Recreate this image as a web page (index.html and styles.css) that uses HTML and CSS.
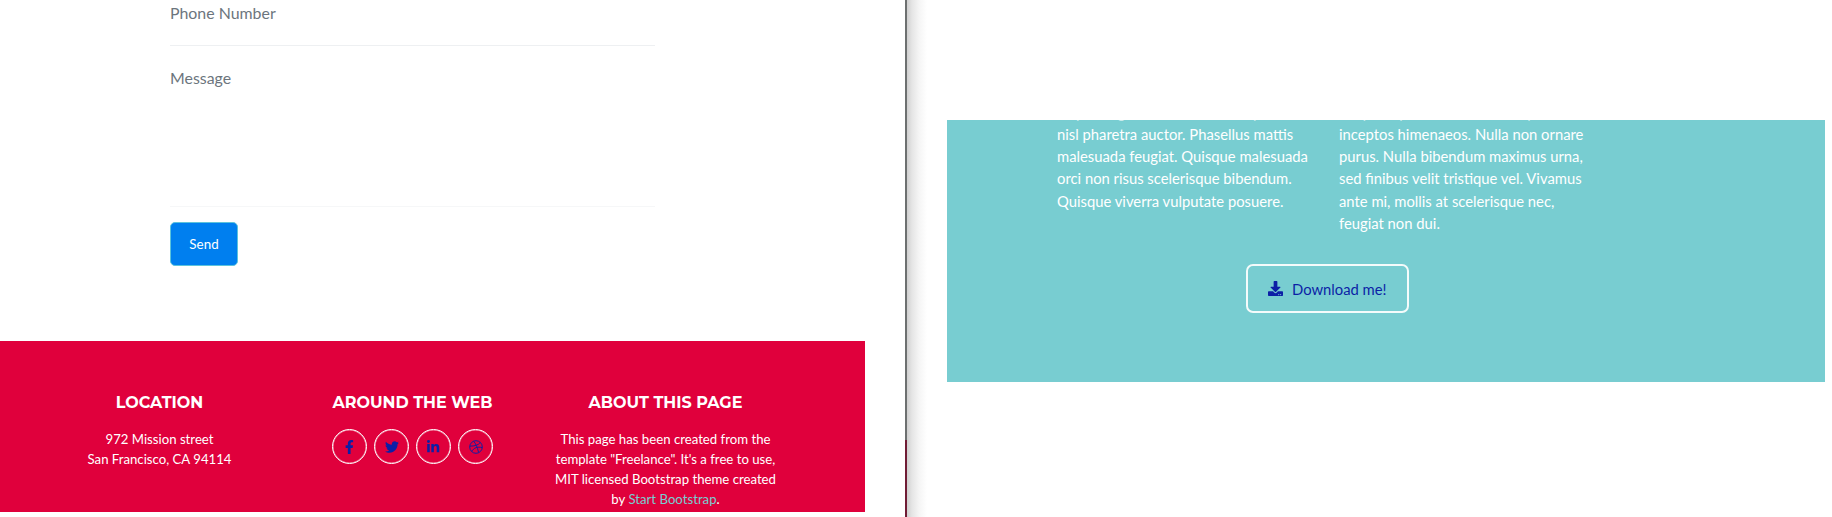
FILE: index.html
```html
<!DOCTYPE html>
<html lang="en">
<head>
<meta charset="utf-8">
<title>Freelance</title>
<link rel="stylesheet" href="styles.css">
</head>
<body>
<div class="split">
  <section class="pane pane-left">
    <form class="contact">
      <div class="field field-phone"><label>Phone Number</label></div>
      <div class="field field-message"><label>Message</label></div>
      <button class="send" type="button">Send</button>
    </form>
    <footer class="footer">
      <div class="footer-col">
        <h4>Location</h4>
        <p>972 Mission street<br>San Francisco, CA 94114</p>
      </div>
      <div class="footer-col">
        <h4>Around the Web</h4>
        <div class="social">
          <a class="circle"><svg height="14" viewBox="0 0 320 512"><path d="M279 288l14-93h-89v-60c0-25 12-50 52-50h41V7s-37-7-72-7c-73 0-121 44-121 125v70H23v93h81v224h100V288z"/></svg></a>
          <a class="circle"><svg height="14" viewBox="0 0 512 512"><path d="M459 152c0 4 0 9 0 14 0 138-105 298-298 298-59 0-115-17-161-47 8 1 16 1 25 1 49 0 94-16 130-45-46-1-85-31-98-73 7 1 13 2 20 2 9 0 19-1 27-4-48-9-84-51-84-103v-1c14 8 30 13 47 13-28-19-46-51-46-87 0-19 5-37 14-53 51 64 129 105 216 110-2-8-3-16-3-24 0-58 47-105 105-105 30 0 57 13 77 33 24-4 46-13 66-25-8 24-24 45-46 58 21-2 42-8 60-16-14 21-32 39-51 54z"/></svg></a>
          <a class="circle"><svg height="14" viewBox="0 0 448 512"><path d="M100 448H7V149h93zM54 108C24 108 0 83 0 54a54 54 0 0 1 108 0c0 29-25 54-54 54zM448 448h-93V302c0-34-1-79-48-79-49 0-56 38-56 77v148h-93V149h89v41h1c13-24 43-48 88-48 95 0 112 62 112 142z"/></svg></a>
          <a class="circle"><svg height="14" viewBox="0 0 512 512"><g fill="none" stroke="#0c1fa6" stroke-width="36"><circle cx="256" cy="256" r="230"/><path d="M169 44c72 86 139 204 181 411M28 224c168 1 308-25 386-136M96 425c82-144 219-193 388-145"/></g></svg></a>
        </div>
      </div>
      <div class="footer-col">
        <h4>About this page</h4>
        <p>This page has been created from the<br>template "Freelance". It's a free to use,<br>MIT licensed Bootstrap theme created<br>by <a class="link">Start Bootstrap</a>.</p>
      </div>
    </footer>
  </section>
  <div class="divider"></div>
  <section class="pane pane-right">
    <div class="about">
      <div class="columns">
        <p><span class="scrolled">turpis magna sed rhoncus semper</span>nisl pharetra auctor. Phasellus mattis<br>malesuada feugiat. Quisque malesuada<br>orci non risus scelerisque bibendum.<br>Quisque viverra vulputate posuere.</p>
        <p><span class="scrolled">torquent per conubia nostra, per</span>inceptos himenaeos. Nulla non ornare<br>purus. Nulla bibendum maximus urna,<br>sed finibus velit tristique vel. Vivamus<br>ante mi, mollis at scelerisque nec,<br>feugiat non dui.</p>
      </div>
      <a class="download"><svg width="15" height="15" viewBox="0 0 512 512"><path d="M216 0h80c13 0 24 11 24 24v168h88c18 0 27 21 14 34L269 378c-7 7-19 7-26 0L90 226c-13-13-4-34 14-34h88V24c0-13 11-24 24-24zM512 376v112c0 13-11 24-24 24H24c-13 0-24-11-24-24V376c0-13 11-24 24-24h147l49 49c20 20 52 20 72 0l49-49h147c13 0 24 11 24 24zM388 464a20 20 0 1 0-40 0 20 20 0 0 0 40 0zm64 0a20 20 0 1 0-40 0 20 20 0 0 0 40 0z"/></svg><span>Download me!</span></a>
    </div>
  </section>
</div>
</body>
</html>
```
FILE: styles.css
```css
* { box-sizing: border-box; }
body {
  margin: 0;
  overflow: hidden;
  background: #fff;
  font-family: Lato, sans-serif;
}
p, h4 { margin: 0; white-space: nowrap; }
.split { display: flex; height: 517px; }
.pane-left { width: 905px; display: flex; flex-direction: column; }
.contact { height: 341px; padding-left: 170px; }
.field {
  width: 485px;
  border-bottom: 1px solid #eef0f2;
  color: #6c757d;
  font-size: 15.9px;
  line-height: 24px;
}
.field label { display: block; }
.field-phone { height: 46px; padding-top: 1px; }
.field-message { height: 161px; padding-top: 20px; border-color: #f6f7f8; }
.send {
  display: block;
  width: 68px;
  height: 44px;
  margin-top: 15px;
  padding: 0;
  border: 1px solid #5cc3dc;
  border-radius: 5px;
  background: #007fef;
  color: #fff;
  font: 13.4px/20px Lato, sans-serif;
}
.footer {
  display: flex;
  width: 865px;
  height: 171px;
  padding: 52px 73px 0 33px;
  background: #e0003c;
  color: #fff;
  text-align: center;
}
.footer-col { width: 253px; }
.footer h4 {
  margin-bottom: 16px;
  font: 700 16px/20px Montserrat, Inter, sans-serif;
  text-transform: uppercase;
}
.footer p { font-size: 13.2px; line-height: 20px; }
.link { color: #78cdd1; }
.social { display: flex; justify-content: center; gap: 7px; }
.circle {
  display: flex;
  align-items: center;
  justify-content: center;
  width: 35px;
  height: 35px;
  border: 1px solid #fff;
  box-shadow: inset 0 0 0 0.5px rgba(255, 255, 255, 0.6);
  border-radius: 50%;
}
svg { fill: #0c1fa6; }
.divider {
  width: 2px;
  background: linear-gradient(#6d7070 440px, #701c35 440px);
}
.pane-right {
  width: 925px;
  padding: 120px 7px 0 40px;
  background: linear-gradient(90deg, #d0d0d0, #e5e5e5 5px, #f5f5f5 12px, #fff 20px) no-repeat;
}
.about {
  height: 262px;
  padding: 3px 0 0 110px;
  overflow: hidden;
  background: #78cdd1;
  color: #fff;
}
.columns { display: flex; height: 163px; margin-top: -22px; }
.columns p { width: 282px; font-size: 14.8px; line-height: 22.33px; }
.scrolled { display: block; height: 21.7px; opacity: 0.6; }
.download {
  display: flex;
  align-items: center;
  gap: 9px;
  width: 163px;
  height: 49px;
  margin-left: 189px;
  padding-left: 20px;
  border: 2px solid #f4fbfb;
  border-radius: 7px;
  color: #0c1fa6;
  font-size: 14.8px;
  white-space: nowrap;
}
```
